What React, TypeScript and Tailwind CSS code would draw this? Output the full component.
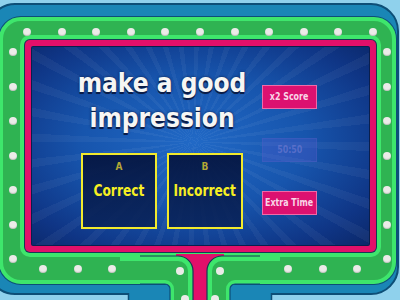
import React from 'react'

function Dot() {
  return <div className="h-[8px] w-[8px] shrink-0 rounded-full bg-[#ebebe8] shadow-[inset_0_-1px_1px_rgba(0,0,0,0.18)]" />
}

function Dots({ count }: { count: number }) {
  return (
    <>
      {Array.from({ length: count }).map((_, i) => (
        <Dot key={i} />
      ))}
    </>
  )
}

function StageBase() {
  // lower stem of the stage frame, drawn over the frame
  const leg = (
    <>
      <path d="M0,6 L58,6 A15,15 0 0 1 73,21 L73,50 L50,50 L50,39 A5,5 0 0 0 45,34 L0,34 Z" fill="#3ee66c" />
      <path d="M0,11 L58,11 A10,10 0 0 1 68,21 L68,50 L54,50 L54,39 A9,9 0 0 0 45,30 L0,30 Z" fill="#2fb352" />
      <path d="M20,6 L58,6 A15,15 0 0 1 73,21 L73,50" fill="none" stroke="#153a55" strokeWidth="1.2" />
      <path d="M20,34 L45,34 A5,5 0 0 1 50,39 L50,50" fill="none" stroke="#0d4f77" strokeWidth="1.2" />
      <circle cx="60" cy="21" r="4" fill="#ebebe8" />
      <circle cx="65" cy="49" r="4" fill="#ebebe8" />
    </>
  )
  return (
    <svg className="absolute left-[120px] top-[250px]" width="160" height="50" viewBox="0 0 160 50">
      <rect x="8" y="36" width="144" height="14" fill="#1a86b6" />
      <line x1="8.5" y1="43" x2="8.5" y2="50" stroke="#0d4f77" strokeWidth="1.5" />
      <line x1="151.5" y1="43" x2="151.5" y2="50" stroke="#0d4f77" strokeWidth="1.5" />
      <rect x="56" y="4" width="48" height="46" fill="#e2106a" />
      {leg}
      <g transform="translate(160,0) scale(-1,1)">{leg}</g>
    </svg>
  )
}

function AnswerCard({ letter, text }: { letter: string; text: string }) {
  return (
    <div className="relative flex h-[76px] w-[76px] items-center justify-center border-2 border-[#f2ea2c] bg-[linear-gradient(180deg,rgba(5,20,62,0.92),rgba(9,34,88,0.85))]">
      <div className="absolute left-0 right-0 top-[6px] text-center text-[10px] font-bold leading-[12px] text-[#b3a735]">{letter}</div>
      <span className="inline-block scale-x-[0.85] whitespace-nowrap text-[16px] font-bold leading-[20px] text-[#f6ef22]">{text}</span>
    </div>
  )
}

function PowerUp({ label, disabled }: { label: string; disabled?: boolean }) {
  const tone = disabled
    ? 'border-[#4a5fc0]/40 bg-[#5a5ad0]/30 text-[#6a78d0]/70'
    : 'border-[#f06aa8] bg-[#dc1170] text-[#f9d6e7]'
  return (
    <div className={`flex h-[24px] w-[55px] items-center justify-center border ${tone}`}>
      <span className="inline-block scale-x-[0.8] whitespace-nowrap text-[11px] font-bold leading-[14px]">{label}</span>
    </div>
  )
}

export default function App() {
  return (
    <div className="relative h-[300px] w-[400px] overflow-hidden bg-[#8fd1ec] font-['DejaVu_Sans_Condensed','DejaVu_Sans',sans-serif]">
      {/* outer teal frame */}
      <div className="ml-[-13px] mt-[3px] h-[292px] w-[412px] rounded-[28px] border-2 border-[#0d4f77] bg-[#1a86b6] pl-[10px] pt-[12px]">
        {/* green light frame */}
        <div className="h-[267px] w-[397px] rounded-[22px] border-4 border-[#3ee66c] bg-[#2fb352] pl-[22px] pt-[19px] shadow-[0_0_0_1px_#0d4f77]">
          {/* pink border */}
          <div className="h-[212px] w-[351px] rounded-[5px] bg-[#e2106a] p-[6px] shadow-[0_0_0_1px_#153a55,0_0_0_5px_#3ee66c]">
            {/* blue screen */}
            <div className="flex h-[200px] w-[339px] rounded-[2px] bg-[repeating-conic-gradient(from_0deg_at_48%_48%,rgba(255,255,255,0.045)_0deg_3deg,rgba(255,255,255,0)_3deg_9deg),radial-gradient(ellipse_at_48%_48%,#2169c6_0%,#1755ad_45%,#0f3585_80%,#0b2768_100%)] pl-[31px] shadow-[inset_0_0_0_1px_#0a1f4d]">
              <div className="flex w-[200px] flex-col items-center pt-[20px]">
                <div className="text-center text-[26px] font-bold leading-[35px] text-[#f6f6f4] [text-shadow:0_2px_0_#0a1c48,0_0_3px_#0a1c48]">
                  make a good
                  <br />
                  impression
                </div>
                <div className="mt-[17px] flex gap-[10px]">
                  <AnswerCard letter="A" text="Correct" />
                  <AnswerCard letter="B" text="Incorrect" />
                </div>
              </div>
              <div className="flex flex-col gap-[29px] pt-[39px]">
                <PowerUp label="x2 Score" />
                <PowerUp label="50:50" disabled />
                <PowerUp label="Extra Time" />
              </div>
            </div>
          </div>
        </div>
      </div>

      {/* stage lights */}
      <div className="absolute left-[23px] top-[28px] flex w-[354px] justify-between">
        <Dots count={11} />
      </div>
      <div className="absolute left-[9px] top-[48px] flex h-[215px] flex-col justify-between">
        <Dots count={7} />
      </div>
      <div className="absolute left-[383px] top-[48px] flex h-[215px] flex-col justify-between">
        <Dots count={7} />
      </div>
      <div className="absolute left-[39px] top-[265px] flex w-[112px] justify-between">
        <Dots count={4} />
      </div>
      <div className="absolute left-[250px] top-[265px] flex w-[111px] justify-between">
        <Dots count={4} />
      </div>

      <StageBase />
    </div>
  )
}
